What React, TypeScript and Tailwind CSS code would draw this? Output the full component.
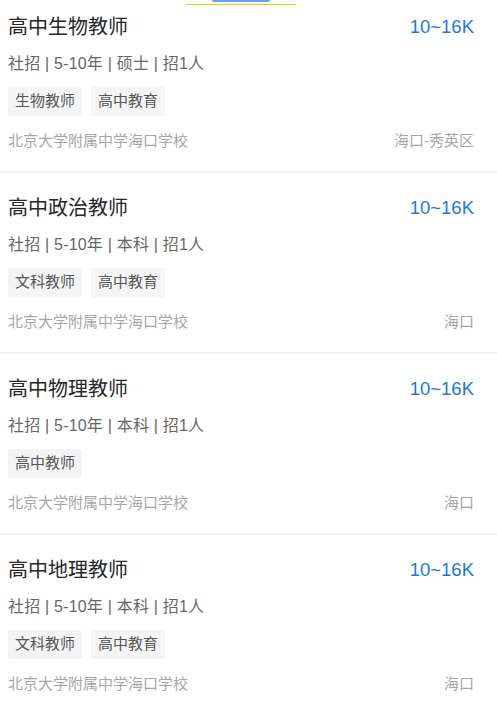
const font = { fontFamily: '"Liberation Sans", "Noto Sans CJK SC", "Noto Sans", sans-serif' };

type Job = {
  title: string;
  salary: string;
  degree: string;
  tags: string[];
  company: string;
  city: string;
};

const jobs: Job[] = [
  { title: "高中生物教师", salary: "10~16K", degree: "硕士", tags: ["生物教师", "高中教育"], company: "北京大学附属中学海口学校", city: "海口-秀英区" },
  { title: "高中政治教师", salary: "10~16K", degree: "本科", tags: ["文科教师", "高中教育"], company: "北京大学附属中学海口学校", city: "海口" },
  { title: "高中物理教师", salary: "10~16K", degree: "本科", tags: ["高中教师"], company: "北京大学附属中学海口学校", city: "海口" },
  { title: "高中地理教师", salary: "10~16K", degree: "本科", tags: ["文科教师", "高中教育"], company: "北京大学附属中学海口学校", city: "海口" },
];

function JobCard({ job, first }: { job: Job; first: boolean }) {
  return (
    <div
      className={
        "flex flex-col border-b-2 border-[#f2f2f2] pl-[8px] pr-[23px] pb-[20px] " +
        (first ? "pt-[5px]" : "pt-[21px]")
      }
    >
      <div className="flex h-[28px] items-center justify-between">
        <p className="text-[20px] leading-[28px] text-[#262626]">{job.title}</p>
        <p className="text-[18.5px] leading-[28px] text-[#1a78e6]">{job.salary}</p>
      </div>
      <p className="mt-[11px] text-[16px] leading-[24px] tracking-[0.2px] text-[#666666]">
        社招 | 5-10年 | {job.degree} | 招1人
      </p>
      <div className="mt-[11px] flex gap-[9px]">
        {job.tags.map((tag) => (
          <span
            key={tag}
            className="flex h-[29px] items-center rounded-[3px] bg-[#f4f4f4] px-[7px] text-[15px] text-[#555555]"
          >
            {tag}
          </span>
        ))}
      </div>
      <div className="mt-[15px] flex h-[20px] items-center justify-between text-[15px] text-[#a6a6a6]">
        <span>{job.company}</span>
        <span>{job.city}</span>
      </div>
    </div>
  );
}

export default function App() {
  return (
    <div className="min-h-[713px] w-[497px] bg-white" style={font}>
      <div className="relative h-[8px]">
        <div className="absolute left-[212px] top-0 h-[2px] w-[58px] rounded-b-sm bg-[#6aa3e6]" />
        <div className="absolute left-[186px] top-[4px] h-[1px] w-[110px] bg-[#f8c21a]" />
      </div>
      {jobs.map((job, i) => (
        <JobCard key={job.title} job={job} first={i === 0} />
      ))}
    </div>
  );
}
